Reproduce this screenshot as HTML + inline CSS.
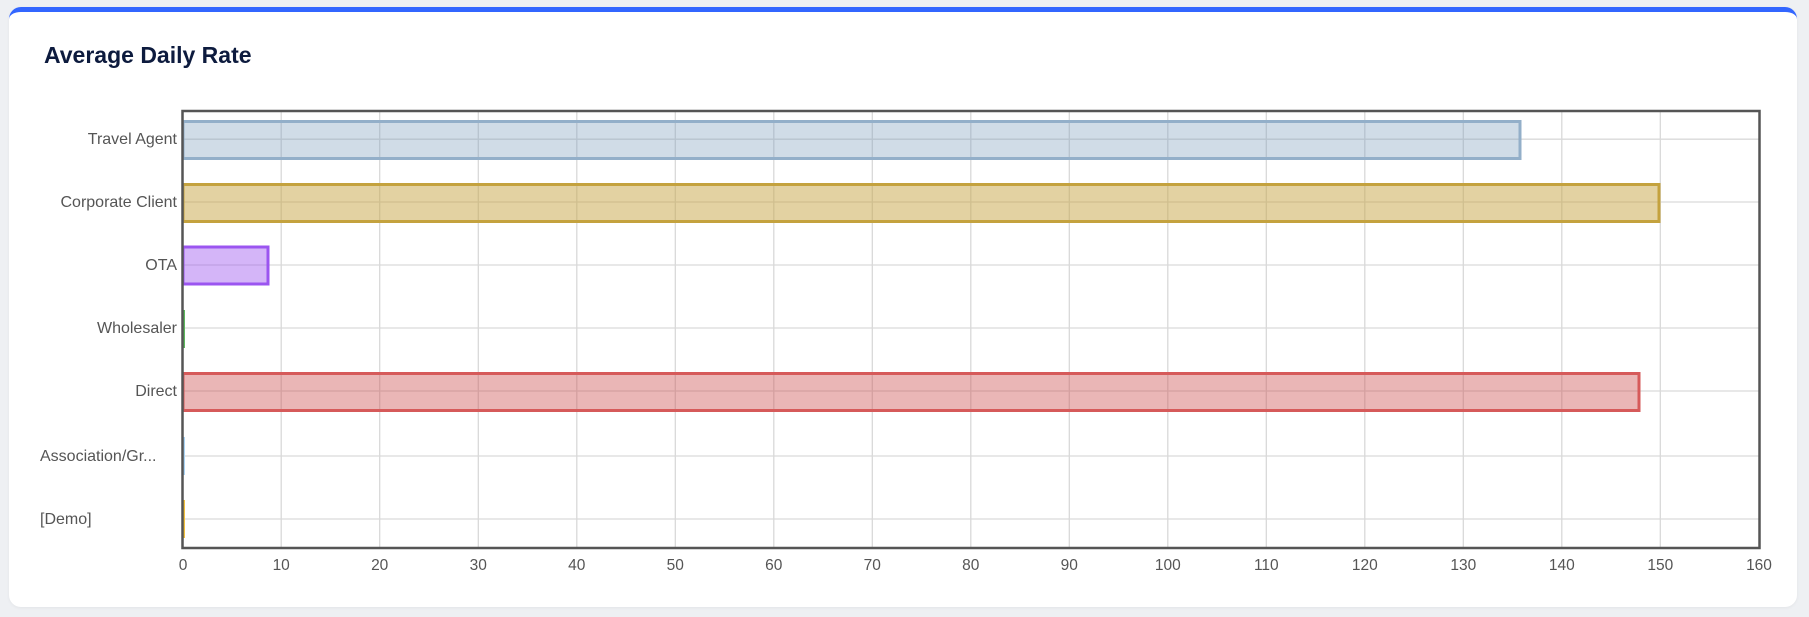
<!DOCTYPE html>
<html><head><meta charset="utf-8"><style>
html,body{margin:0;padding:0;background:#eef0f3;width:1809px;height:617px;overflow:hidden;font-family:"Liberation Sans",sans-serif}
.card{position:absolute;left:9px;top:7px;width:1788px;height:600px;background:#fff;border-radius:12px;border-top:5px solid #3366ff;box-sizing:border-box;box-shadow:0 1px 3px rgba(0,0,0,.05)}
h1{position:absolute;left:35px;top:30px;margin:0;font-size:23px;font-weight:bold;color:#0d1b3e}
svg{position:absolute;left:0;top:0}
</style></head><body>
<div class="card"><h1>Average Daily Rate</h1></div>
<svg width="1809" height="617" font-family="Liberation Sans, sans-serif">
<g stroke="#d9d9d9" stroke-width="1.3">
<line x1="281.2" y1="111" x2="281.2" y2="548"/><line x1="379.7" y1="111" x2="379.7" y2="548"/><line x1="478.3" y1="111" x2="478.3" y2="548"/><line x1="576.8" y1="111" x2="576.8" y2="548"/><line x1="675.3" y1="111" x2="675.3" y2="548"/><line x1="773.8" y1="111" x2="773.8" y2="548"/><line x1="872.3" y1="111" x2="872.3" y2="548"/><line x1="970.8" y1="111" x2="970.8" y2="548"/><line x1="1069.3" y1="111" x2="1069.3" y2="548"/><line x1="1167.8" y1="111" x2="1167.8" y2="548"/><line x1="1266.3" y1="111" x2="1266.3" y2="548"/><line x1="1364.8" y1="111" x2="1364.8" y2="548"/><line x1="1463.3" y1="111" x2="1463.3" y2="548"/><line x1="1561.8" y1="111" x2="1561.8" y2="548"/><line x1="1660.3" y1="111" x2="1660.3" y2="548"/>
<line x1="183" y1="139.2" x2="1759" y2="139.2"/><line x1="183" y1="202" x2="1759" y2="202"/><line x1="183" y1="265" x2="1759" y2="265"/><line x1="183" y1="328" x2="1759" y2="328"/><line x1="183" y1="391" x2="1759" y2="391"/><line x1="183" y1="456" x2="1759" y2="456"/><line x1="183" y1="519" x2="1759" y2="519"/>
</g>
<g stroke-width="3">
<rect x="183" y="121.5" width="1337" height="37" fill="rgba(120,155,185,0.35)" stroke="#93afc9"/>
<rect x="183" y="184.5" width="1476" height="37" fill="rgba(200,165,70,0.5)" stroke="#c4a23e"/>
<rect x="183" y="247" width="85" height="37" fill="rgba(160,90,240,0.45)" stroke="#9b55f0"/>
<rect x="183" y="373.5" width="1456" height="37" fill="rgba(205,80,80,0.42)" stroke="#d65a5a"/>
</g>
<rect x="182" y="310" width="3" height="38" fill="#5cb85c"/>
<rect x="182" y="437" width="3" height="38" fill="#aad4f5"/>
<rect x="182" y="500" width="3" height="38" fill="#f2c03c"/>
<rect x="182.5" y="111" width="1577" height="437" fill="none" stroke="#555" stroke-width="2.5"/>
<g font-size="16" fill="#555" text-anchor="end">
<text x="177" y="144">Travel Agent</text>
<text x="177" y="207">Corporate Client</text>
<text x="177" y="270">OTA</text>
<text x="177" y="333">Wholesaler</text>
<text x="177" y="396">Direct</text>
<text x="40" y="461" text-anchor="start">Association/Gr...</text>
<text x="40" y="524" text-anchor="start">[Demo]</text>
</g>
<g font-size="15.5" fill="#555" text-anchor="middle">
<text x="183" y="570">0</text><text x="281.2" y="570">10</text><text x="379.7" y="570">20</text><text x="478.3" y="570">30</text><text x="576.8" y="570">40</text><text x="675.3" y="570">50</text><text x="773.8" y="570">60</text><text x="872.3" y="570">70</text><text x="970.8" y="570">80</text><text x="1069.3" y="570">90</text><text x="1167.8" y="570">100</text><text x="1266.3" y="570">110</text><text x="1364.8" y="570">120</text><text x="1463.3" y="570">130</text><text x="1561.8" y="570">140</text><text x="1660.3" y="570">150</text><text x="1759" y="570">160</text>
</g>
</svg>
</body></html>
